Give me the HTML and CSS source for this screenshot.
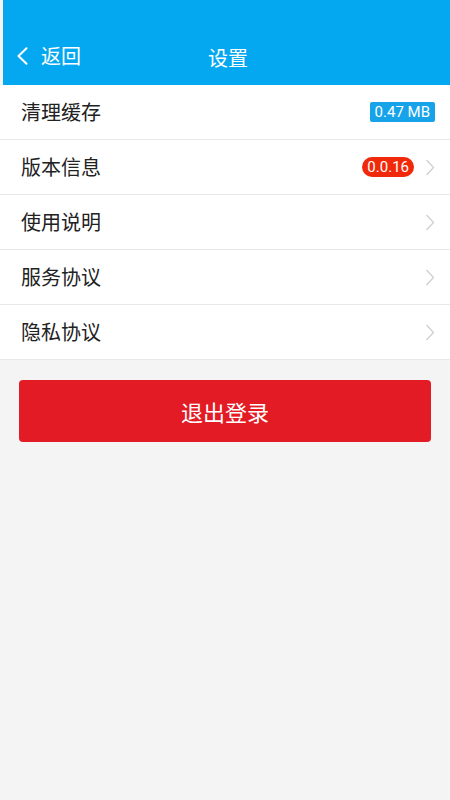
FILE: index.html
```html
<!DOCTYPE html>
<html lang="zh-CN">
<head>
<meta charset="utf-8">
<title>设置</title>
<link rel="stylesheet" href="styles.css">
</head>
<body>
<header class="topbar">
  <div class="back">
    <svg class="back-icon" width="14" height="18" viewBox="0 0 14 18"><path d="M11.5 1.2 L3.5 9 L11.5 16.8" fill="none" stroke="#fff" stroke-width="2" stroke-linecap="round" stroke-linejoin="round"/></svg>
    <span class="back-text">返回</span>
  </div>
  <h1 class="title">设置</h1>
</header>
<ul class="list">
  <li class="row">
    <span class="label">清理缓存</span>
    <span class="badge badge-blue">0.47 MB</span>
  </li>
  <li class="row">
    <span class="label">版本信息</span>
    <span class="badge badge-red">0.0.16</span>
    <svg class="chev" width="10" height="17" viewBox="0 0 10 17"><path d="M1.5 1 L8.5 8.5 L1.5 16" fill="none" stroke="#cfcfcf" stroke-width="1.3"/></svg>
  </li>
  <li class="row">
    <span class="label">使用说明</span>
    <svg class="chev" width="10" height="17" viewBox="0 0 10 17"><path d="M1.5 1 L8.5 8.5 L1.5 16" fill="none" stroke="#cfcfcf" stroke-width="1.3"/></svg>
  </li>
  <li class="row">
    <span class="label">服务协议</span>
    <svg class="chev" width="10" height="17" viewBox="0 0 10 17"><path d="M1.5 1 L8.5 8.5 L1.5 16" fill="none" stroke="#cfcfcf" stroke-width="1.3"/></svg>
  </li>
  <li class="row">
    <span class="label">隐私协议</span>
    <svg class="chev" width="10" height="17" viewBox="0 0 10 17"><path d="M1.5 1 L8.5 8.5 L1.5 16" fill="none" stroke="#cfcfcf" stroke-width="1.3"/></svg>
  </li>
</ul>
<div class="actions">
  <button class="logout">退出登录</button>
</div>
</body>
</html>
```
FILE: styles.css
```css
html, body {
  margin: 0;
  padding: 0;
  background: #f4f4f4;
  font-family: "Noto Sans CJK SC", "Noto Sans", sans-serif;
  height: 100%;
}
.topbar {
  height: 85px;
  background: #04a8f1;
  margin-left: 3px;
  position: relative;
  display: flex;
  align-items: flex-end;
  box-sizing: border-box;
  padding-bottom: 14px;
}
.back {
  display: flex;
  align-items: center;
  padding-left: 12px;
  color: #fff;
  height: 30px;
}
.back-icon {
  display: block;
}
.back-text {
  margin-left: 12px;
  font-size: 20px;
  line-height: 30px;
}
.title {
  position: absolute;
  left: 0;
  right: 0;
  bottom: 12px;
  margin: 0;
  text-align: center;
  font-size: 20px;
  font-weight: normal;
  line-height: 30px;
  color: #fff;
  pointer-events: none;
  padding-left: 3px;
}
.list {
  list-style: none;
  margin: 0;
  padding: 0;
  background: #fff;
}
.row {
  height: 55px;
  box-sizing: border-box;
  border-bottom: 1px solid #e8e8e8;
  display: flex;
  align-items: center;
  padding: 0 15px 0 21px;
}
.label {
  flex: 1;
  font-size: 20px;
  color: #222;
  line-height: 28px;
}
.badge {
  font-family: "Roboto", "Noto Sans", sans-serif;
  color: #fff;
  font-size: 15px;
  line-height: 20px;
  height: 20px;
}
.badge-blue {
  background: #16a3e9;
  border-radius: 2px;
  padding: 0 5px;
}
.badge-red {
  background: #f1290b;
  border-radius: 10px;
  padding: 0 5px;
  margin-right: 11px;
}
.chev {
  display: block;
}
.actions {
  padding: 20px 19px 0 19px;
}
.logout {
  display: block;
  width: 100%;
  height: 62px;
  border: none;
  border-radius: 4px;
  background: #e31b24;
  color: #fff;
  font-family: "Noto Sans CJK SC", "Noto Sans", sans-serif;
  font-size: 22px;
  padding: 0;
}
```
